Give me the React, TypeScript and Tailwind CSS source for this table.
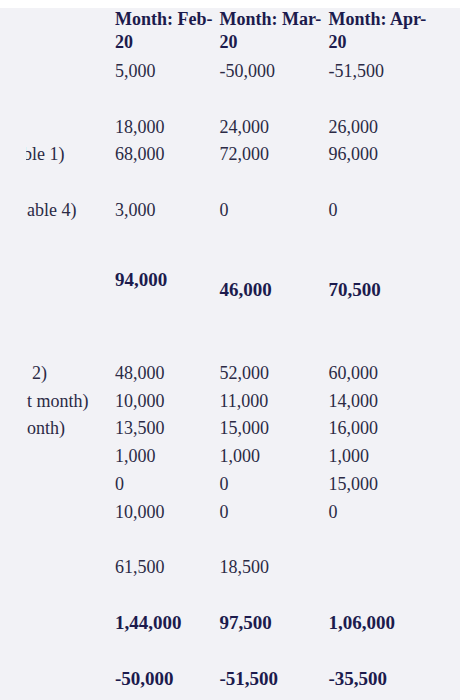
import React from "react"

type Row = {
  label?: React.ReactNode
  values?: string[]
  bold?: boolean
}

const upperRows: Row[] = [
  { values: ["5,000", "-50,000", "-51,500"] },
  {},
  { values: ["18,000", "24,000", "26,000"] },
  { label: <span className="-ml-[3px]">ble 1)</span>, values: ["68,000", "72,000", "96,000"] },
  {},
  { label: <span className="pl-[1px]">able 4)</span>, values: ["3,000", "0", "0"] },
  {},
]

const lowerRows: Row[] = [
  { label: <span className="pl-[6px]">2)</span>, values: ["48,000", "52,000", "60,000"] },
  { label: <span className="pl-[1px]">t month)</span>, values: ["10,000", "11,000", "14,000"] },
  { label: <span className="pl-[1px]">onth)</span>, values: ["13,500", "15,000", "16,000"] },
  { values: ["1,000", "1,000", "1,000"] },
  { values: ["0", "0", "15,000"] },
  { values: ["10,000", "0", "0"] },
  {},
  { values: ["61,500", "18,500", ""] },
  {},
  { values: ["1,44,000", "97,500", "1,06,000"], bold: true },
  {},
  { values: ["-50,000", "-51,500", "-35,500"], bold: true },
]

const gridCols = "grid grid-cols-[89px_104.5px_109px_1fr]"

function TableRow({ row }: { row: Row }) {
  const text = row.bold
    ? "text-[19px] font-bold text-[#1c1b4d]"
    : "text-[18px] text-[#2b2a45]"
  return (
    <div className={`${gridCols} h-[27.7px] leading-[27.7px] ${text}`}>
      <div className="overflow-hidden whitespace-nowrap">{row.label}</div>
      {[0, 1, 2].map((i) => (
        <div key={i} className="whitespace-nowrap">
          {row.values ? row.values[i] : ""}
        </div>
      ))}
    </div>
  )
}

export default function App() {
  return (
    <div className="min-h-screen bg-[#f2f2f6] font-['Liberation_Serif',serif]">
      <div className="h-[8px] bg-white" />
      <div className="pl-[26px]">
        {/* header */}
        <div className={`${gridCols} text-[18px] font-bold leading-[23px] text-[#1c1b4d] h-[46px] mt-[0.4px]`}>
          <div />
          <div className="whitespace-nowrap">
            Month: Feb-
            <br />
            20
          </div>
          <div className="whitespace-nowrap">
            Month: Mar-
            <br />
            20
          </div>
          <div className="whitespace-nowrap">
            Month: Apr-
            <br />
            20
          </div>
        </div>

        <div className="pt-[4px]">
          {upperRows.map((r, i) => (
            <TableRow key={i} row={r} />
          ))}
        </div>

        {/* total receipts row */}
        <div className={`${gridCols} h-[107.4px] text-[19px] font-bold leading-[27.7px] text-[#1c1b4d]`}>
          <div />
          <div className="pt-[13.5px]">94,000</div>
          <div className="pt-[24px]">46,000</div>
          <div className="pt-[24px]">70,500</div>
        </div>

        <div className="pt-[0.5px]">
          {lowerRows.map((r, i) => (
            <TableRow key={i} row={r} />
          ))}
        </div>
      </div>
    </div>
  )
}
